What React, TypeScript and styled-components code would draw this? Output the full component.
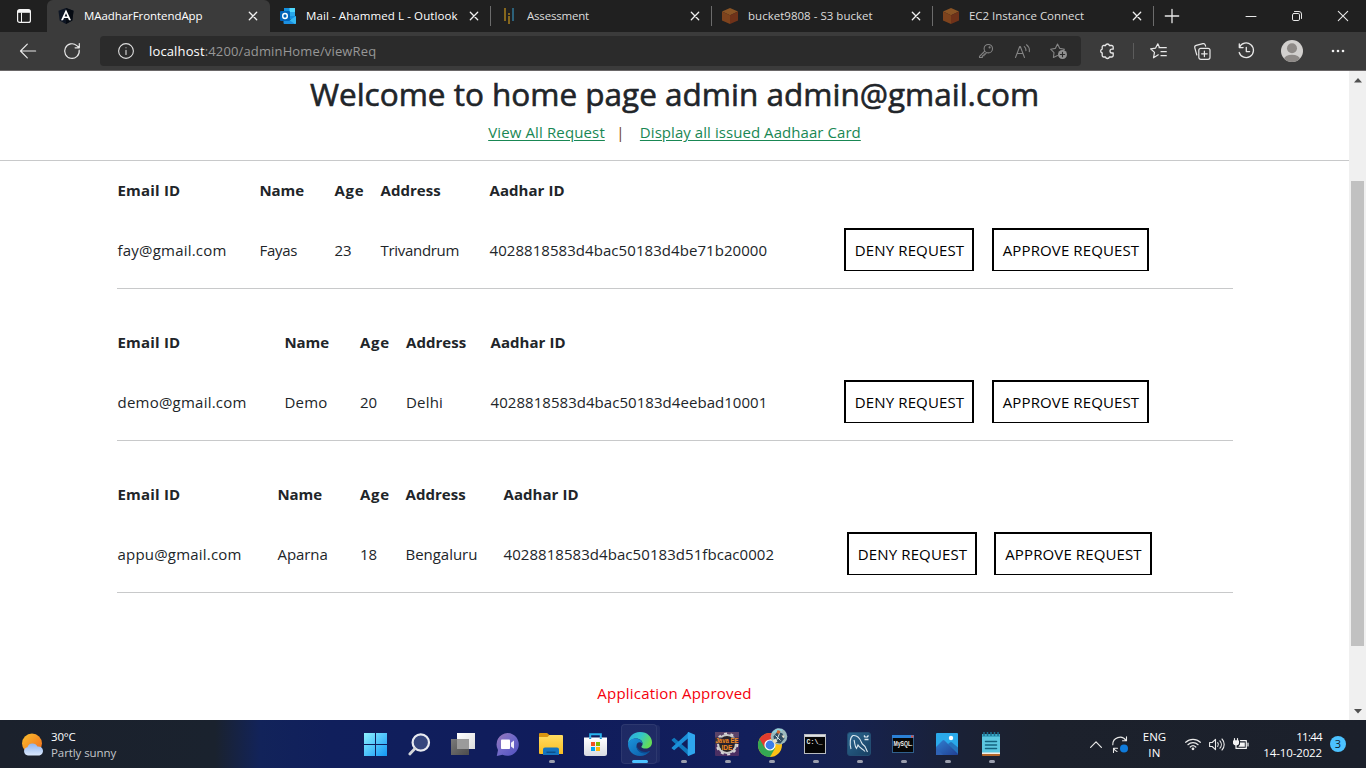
import React from "react";
import styled, { createGlobalStyle } from "styled-components";

const GlobalStyle = createGlobalStyle`
  *, *::before, *::after { box-sizing: border-box; }
  body { margin: 0; background: #fff; }
  svg { display: block; flex: none; overflow: visible; }
`;

const Screen = styled.div`
  display: flex;
  flex-direction: column;
  width: 1366px;
  height: 768px;
  overflow: hidden;
  font-family: "Open Sans", "Noto Sans", sans-serif;
`;

const Label = styled.span<{ $track?: number }>`
  letter-spacing: ${(p) => p.$track ?? 0}px;
  white-space: nowrap;
`;

/* ---------- tab strip ---------- */

const TabStrip = styled.div`
  display: flex;
  height: 32px;
  flex: none;
  background: #202020;
`;

const TabActions = styled.div`
  width: 47px;
  padding: 9px 0 0 17px;
`;

const Tab = styled.div<{ $active?: boolean; $divider?: boolean }>`
  display: flex;
  align-items: center;
  width: ${(p) => (p.$active ? 223 : 221)}px;
  height: 32px;
  padding: 0 13px 0 ${(p) => (p.$active ? 11 : 10)}px;
  border-radius: ${(p) => (p.$active ? "6px 6px 0 0" : "0")};
  background: ${(p) => (p.$active ? "#3b3b3b" : "transparent")};
  color: ${(p) => (p.$active ? "#fff" : "#dcdcdc")};
  font-size: 11.5px;
  position: relative;
  ${(p) =>
    p.$divider &&
    `&::after { content: ""; position: absolute; right: 0; top: 6px; width: 1px; height: 20px; background: #6c6c6c; }`}
`;

const TabTitle = styled(Label)<{ $bright?: boolean }>`
  flex: 1;
  margin-left: 10px;
  line-height: 32px;
  ${(p) => p.$bright && "color: #fff;"}
`;

const NewTab = styled.div`
  display: flex;
  align-items: center;
  justify-content: center;
  width: 36px;
`;

const WindowControls = styled.div`
  display: flex;
  margin-left: auto;
`;

const WindowButton = styled.div`
  display: flex;
  align-items: center;
  justify-content: center;
  width: 46px;
`;

/* ---------- toolbar ---------- */

const Toolbar = styled.div`
  display: flex;
  align-items: center;
  flex: none;
  height: 39px;
  padding-left: 6px;
  background: #3b3b3b;
  border-bottom: 1px solid #6a6768;
`;

const ToolButton = styled.div<{ $w?: number }>`
  display: flex;
  align-items: center;
  justify-content: center;
  width: ${(p) => p.$w ?? 44}px;
  height: 30px;
`;

const AddressBar = styled.div`
  display: flex;
  align-items: center;
  width: 981px;
  height: 30px;
  margin-left: 6px;
  padding: 0 4px 0 18px;
  border-radius: 4px;
  background: #2b2b2b;
`;

const Url = styled(Label)`
  flex: 1;
  margin-left: 15px;
  color: #979797;
  font-size: 13px;
  line-height: 30px;
  b { color: #fff; font-weight: 400; }
`;

const ToolDivider = styled.div`
  width: 1px;
  height: 16px;
  margin: 0 2px 0 1px;
  background: #5c5c5c;
`;

/* ---------- page ---------- */

const Viewport = styled.div`
  display: flex;
  flex: none;
  height: 649px;
`;

const Page = styled.main`
  width: 1349px;
  background: #fff;
  color: #212529;
  font-size: 15px;
`;

const PageHeader = styled.header`
  height: 90px;
  padding-top: 1px;
  border-bottom: 1px solid #c8c9ca;
  text-align: center;
`;

const Title = styled.h1`
  margin: 0;
  font-size: 31.5px;
  font-weight: 500;
  line-height: 43px;
  -webkit-text-stroke: 0.6px #212529;
`;

const Nav = styled.nav`
  display: flex;
  justify-content: center;
  margin-top: 5px;
  line-height: 24px;
`;

const NavLink = styled.a<{ $track: number }>`
  color: #198754;
  letter-spacing: ${(p) => p.$track}px;
  text-decoration: underline;
  text-underline-offset: 2px;
`;

const NavDivider = styled.span`
  width: 35px;
  padding-right: 4px;
  color: #6b3d16;
  text-align: center;
`;

const RequestList = styled.div`
  width: 1116px;
  margin-left: 117px;
`;

const Request = styled.section<{ $columns: string }>`
  display: grid;
  grid-template-columns: ${(p) => p.$columns};
  grid-template-rows: 58px 60px;
  align-items: center;
  height: 128px;
  margin-bottom: 24px;
  border-bottom: 1px solid #c8c9ca;
`;

const Head = styled.div<{ $span?: number; $track?: number }>`
  grid-column: span ${(p) => p.$span ?? 1};
  padding-left: 0.5px;
  font-weight: 700;
  letter-spacing: ${(p) => p.$track ?? 0}px;
`;

const Cell = styled.div<{ $track?: number }>`
  padding: 1px 0 0 0.5px;
  letter-spacing: ${(p) => p.$track ?? 0}px;
  white-space: nowrap;
`;

const ActionButton = styled.button<{ $w: number; $track: number }>`
  width: ${(p) => p.$w}px;
  height: 43px;
  padding: 0 0 0 1px;
  border: 2px solid #000;
  border-bottom-width: 1px;
  background: #fff;
  color: #000;
  font: inherit;
  letter-spacing: ${(p) => p.$track}px;
`;

const Notice = styled.p`
  margin: 0;
  padding-top: 64px;
  color: #f4000c;
  line-height: 24px;
  text-align: center;
  letter-spacing: 0.2px;
`;

const Scrollbar = styled.div`
  display: flex;
  flex-direction: column;
  align-items: center;
  width: 17px;
  padding: 7px 0 6px;
  background: #f0f0f0;
`;

const Thumb = styled.div`
  width: 13px;
  height: 465px;
  margin: 98px 0 auto;
  background: #c1c1c1;
`;

/* ---------- taskbar ---------- */

const Taskbar = styled.footer`
  display: flex;
  align-items: center;
  flex: none;
  height: 48px;
  background: linear-gradient(90deg, #1b212c 0, #1a222e 215px, #12235a 260px, #101f5c 330px, #101c5c 560px, #121f5b 750px, #16224f 850px, #1a2136 960px, #1c212c 1040px, #1b202b 100%);
  color: #fff;
  font-size: 11.5px;
`;

const Weather = styled.div`
  display: flex;
  align-items: center;
  width: 353px;
  padding-left: 21px;
`;

const Lines = styled.div<{ $align?: string; $w?: number }>`
  display: flex;
  flex-direction: column;
  width: ${(p) => (p.$w ? `${p.$w}px` : "auto")};
  padding-top: 2px;
  line-height: 16px;
  text-align: ${(p) => p.$align ?? "left"};
`;

const WeatherText = styled(Lines)`
  margin-left: 7px;
  span:last-child { color: #c3c6ca; }
`;

const Apps = styled.div`
  display: flex;
`;

const AppSlot = styled.div<{ $state?: "running" | "focused" }>`
  display: flex;
  align-items: center;
  justify-content: center;
  position: relative;
  width: 44px;
  height: 48px;
  ${(p) =>
    p.$state &&
    `&::after {
      content: ""; position: absolute; bottom: 5px; border-radius: 2px; height: 3px;
      left: ${p.$state === "focused" ? 15 : 20}px;
      width: ${p.$state === "focused" ? 16 : 6}px;
      background: ${p.$state === "focused" ? "#4cc2ff" : "#9b9fae"};
    }`}
`;

const FocusPlate = styled.div`
  display: flex;
  align-items: center;
  justify-content: center;
  width: 36px;
  height: 40px;
  margin-right: 1px;
  padding-left: 3px;
  border: 1px solid rgba(255, 255, 255, 0.07);
  border-radius: 4px;
  background: rgba(255, 255, 255, 0.06);
  box-shadow: 4px 0 0 -1px rgba(255, 255, 255, 0.06);
`;

const Tray = styled.div`
  display: flex;
  align-items: center;
  margin-left: auto;
  padding-right: 20px;
`;

const TrayIcon = styled.div<{ $w: number }>`
  display: flex;
  align-items: center;
  justify-content: center;
  width: ${(p) => p.$w}px;
`;

const Badge = styled.div`
  width: 16px;
  height: 16px;
  margin-left: 8px;
  border-radius: 50%;
  background: #4cc2ff;
  color: #10202c;
  font-size: 11px;
  line-height: 16px;
  text-align: center;
`;

/* ---------- icons ---------- */

const Line = ({ w = 16, h = w, vb, color = "#e8e8e8", sw = 1.1, children }: {
  w?: number; h?: number; vb?: string; color?: string; sw?: number; children: React.ReactNode;
}) => (
  <svg width={w} height={h} viewBox={vb ?? `0 0 ${w} ${h}`} fill="none" stroke={color} strokeWidth={sw} strokeLinecap="round" strokeLinejoin="round">
    {children}
  </svg>
);

const Cross = ({ size = 8 }: { size?: number }) => (
  <Line w={size} sw={1.3} vb="0 0 8 8" color="#f0f0f0"><path d="M.3.3l7.4 7.4M7.7.3L.3 7.7" /></Line>
);

const AngularIcon = () => (
  <svg width="16" height="16" viewBox="0 0 16 16">
    <path d="M8 0l7.5 2.7-1.2 9.8L8 16 1.700 12.500.5 2.700z" fill="#0e1624" />
    <path d="M8 0l7.500 2.700-1.200 9.800L8 16z" fill="#050a12" />
    <path d="M8 1.500L3 12.300h2l1-2.400h4l1 2.400h2zm0 3.800l1.400 3.200H6.600z" fill="#fff" />
  </svg>
);

const OutlookIcon = () => (
  <svg width="16" height="16" viewBox="0 0 16 16">
    <path d="M4 0h11v11H4z" fill="#1490df" />
    <path d="M9.500 0H15v4H9.500z" fill="#50d9ff" />
    <path d="M4 4h5.500v4H4z" fill="#0a5ea8" />
    <path d="M9.500 4H15v4H9.500z" fill="#28a8ea" />
    <path d="M3.500 8l6.300 4L16 8v7a1 1 0 0 1-1 1H4.500a1 1 0 0 1-1-1z" fill="#1b8fe0" />
    <path d="M16 8v7a1 1 0 0 1-1 1l-8-5.500 3 1.500z" fill="#35b8f1" />
    <rect y="3" width="10" height="10" rx="1" fill="#0364b8" />
    <ellipse cx="5" cy="8" rx="2.300" ry="2.500" fill="none" stroke="#fff" strokeWidth="1.400" />
  </svg>
);

const AssessmentIcon = () => (
  <svg width="16" height="16" viewBox="0 0 16 16">
    <path d="M3 0h2v13H3zM7 5h2v2H7zM7 8h2v8H7z" fill="#86671d" />
    <path d="M11 0h2v13h-2z" fill="#2c617a" />
  </svg>
);

const CubeIcon = () => (
  <svg width="16" height="16" viewBox="0 0 16 16">
    <path d="M8 0l8 3.500L8 7.300 0 3.500z" fill="#8a5425" />
    <path d="M0 3.500l8 3.800V16l-8-3.500z" fill="#7e431d" />
    <path d="M16 3.500L8 7.300V16l8-3.500z" fill="#6f3219" />
  </svg>
);

const WeatherIcon = () => (
  <svg width="23" height="24" viewBox="0 0 23 24">
    <defs>
      <linearGradient id="sun" x1="0" y1="0" x2="1" y2="1"><stop offset="0" stopColor="#fbc02d" /><stop offset="1" stopColor="#f0681c" /></linearGradient>
      <linearGradient id="cloud" x1="0" y1="0" x2="0" y2="1"><stop offset="0" stopColor="#8fb4ee" /><stop offset="1" stopColor="#dbe8fc" /></linearGradient>
    </defs>
    <circle cx="11" cy="11.500" r="10" fill="url(#sun)" />
    <path d="M7 23.500a4.200 4.200 0 0 1-.6-8.300 5.400 5.400 0 0 1 10-.7 4.600 4.600 0 1 1 2 9z" fill="url(#cloud)" />
  </svg>
);

const StartIcon = () => (
  <svg width="23" height="23" viewBox="0 0 23 23">
    <defs><linearGradient id="start" x1="0" y1="0" x2="23" y2="23" gradientUnits="userSpaceOnUse"><stop offset="0" stopColor="#8df1ff" /><stop offset="1" stopColor="#1297f5" /></linearGradient></defs>
    <path d="M0 0h11v11H0zM12 0h11v11H12zM0 12h11v11H0zM12 12h11v11H12z" fill="url(#start)" />
  </svg>
);

const SearchIcon = () => (
  <svg width="22" height="23" viewBox="0 0 22 23">
    <circle cx="12.800" cy="9.500" r="8.200" fill="#35457d" stroke="#e8eaf0" strokeWidth="2.200" />
    <path d="M7 15.500L1.800 21" stroke="#d4d6da" strokeWidth="2.800" strokeLinecap="round" />
  </svg>
);

const TaskViewIcon = () => (
  <svg width="24" height="22" viewBox="0 0 24 22">
    <defs>
      <linearGradient id="tvw" x1="0" y1="0" x2="1" y2="1"><stop offset="0" stopColor="#fff" /><stop offset="1" stopColor="#dcdcdc" /></linearGradient>
      <linearGradient id="tvg" x1="0" y1="0" x2="1" y2="1"><stop offset="0" stopColor="#7a7a7a" /><stop offset="1" stopColor="#4c4c4c" /></linearGradient>
    </defs>
    <path d="M6 0h18v16H6z" fill="url(#tvw)" />
    <path d="M0 6h18v16H0z" fill="url(#tvg)" />
    <path d="M6 6h12v10H6z" fill="#9b9b9b" />
  </svg>
);

const ChatIcon = () => (
  <svg width="23" height="23" viewBox="0 0 23 23">
    <defs><linearGradient id="chat" x1="0" y1="0" x2="1" y2="1"><stop offset="0" stopColor="#9a78b8" /><stop offset=".5" stopColor="#6f68c8" /><stop offset="1" stopColor="#504fbd" /></linearGradient></defs>
    <path d="M11.500 0a11.400 11.400 0 1 1-5 21.700L.8 22.900 2 17A11.400 11.400 0 0 1 11.500 0z" fill="url(#chat)" />
    <rect x="5" y="6.500" width="9" height="9.500" rx=".8" fill="#fff" />
    <path d="M15 9.800l3-2.400v8.400l-3-2.400z" fill="#f0effa" />
  </svg>
);

const FolderIcon = () => (
  <svg width="24" height="22" viewBox="0 0 24 22">
    <defs><linearGradient id="fold" x1="0" y1="0" x2="0" y2="1"><stop offset="0" stopColor="#ffdc62" /><stop offset="1" stopColor="#f9bd22" /></linearGradient></defs>
    <path d="M0 1a1 1 0 0 1 1-1h7l3 2.500L9 5H0z" fill="#d89410" />
    <path d="M0 4h8.500l2-2H23a1 1 0 0 1 1 1v18H1a1 1 0 0 1-1-1z" fill="url(#fold)" />
    <path d="M4 22v-5.500a2 2 0 0 1 2-2h12a2 2 0 0 1 2 2V22z" fill="#1474c0" />
    <path d="M7.500 18.500h9V20h-9z" fill="#0c4e8a" />
  </svg>
);

const StoreIcon = () => (
  <svg width="23" height="23" viewBox="0 0 23 23">
    <defs><linearGradient id="store" x1="0" y1="0" x2="0" y2="1"><stop offset="0" stopColor="#fff" /><stop offset="1" stopColor="#d9dce2" /></linearGradient></defs>
    <path d="M6.200 6V1.200h10.600V6" fill="none" stroke="#28b4ee" strokeWidth="2" />
    <path d="M0 4.500h23v16a2.500 2.500 0 0 1-2.500 2.500h-18A2.500 2.500 0 0 1 0 20.500z" fill="url(#store)" />
    <path d="M7 9h4v4H7z" fill="#f25022" /><path d="M12 9h4v4h-4z" fill="#7fba00" />
    <path d="M7 14h4v4H7z" fill="#00a4ef" /><path d="M12 14h4v4h-4z" fill="#ffb900" />
    <path d="M6.200 4.500v1.500M16.800 4.500v1.500" stroke="#178ac8" strokeWidth="2" />
  </svg>
);

const EdgeIcon = () => (
  <svg width="24" height="24" viewBox="0 0 24 24">
    <defs>
      <linearGradient id="edgeTop" x1="0" y1="0" x2="1" y2=".4"><stop offset="0" stopColor="#2ba7e0" /><stop offset=".55" stopColor="#33c6c8" /><stop offset="1" stopColor="#63dc58" /></linearGradient>
      <linearGradient id="edgeLow" x1="0" y1="0" x2="1" y2="1"><stop offset="0" stopColor="#1a93dc" /><stop offset="1" stopColor="#0c59a4" /></linearGradient>
    </defs>
    <path d="M0 12C0 5 5 0 12 0c7.500 0 12 5 12 10.200 0 4-3 6.300-6.400 6.300-2.600 0-4.200-.9-4.200-1.800 0-.6 1.200-1.200 1.200-3C14.600 9 12 6.500 8 6.500 4 6.500.8 9 0 12z" fill="url(#edgeTop)" />
    <path d="M0 12c.6-3.500 4-5.500 7.500-5.500 4 0 7 2.400 7 5.200-.6-1-1.600-1.500-2.800-1.500-2 0-3.200 1.700-3.200 3.900 0 4 4 6.400 8 6.400 2.200 0 4-.6 5.500-1.500C19.700 22 16 24 12 24 5 24 0 18.500 0 12z" fill="url(#edgeLow)" />
    <path d="M8.500 14.100c-.3 5 4.500 7.400 8 7.400 2.500 0 4.500-1.300 5.500-2.500-5 2-10.500 1.500-13.500-4.900z" fill="#0a4c93" />
  </svg>
);

const CodeIcon = () => (
  <svg width="24" height="24" viewBox="0 0 24 24">
    <path d="M1.200 7.200l2-1.500L18 18.500V24L.8 8.600a1 1 0 0 1 .4-1.400z" fill="#0f78bd" />
    <path d="M1.200 16.800l2 1.500L18 5.500V0L.8 15.400a1 1 0 0 0 .4 1.400z" fill="#1b8fd8" />
    <path d="M17.500 0L24 2.800v18.400L17.500 24c-.5 0-.8-.3-.8-.8V.8c0-.5.300-.8.8-.8z" fill="#2ea6ee" />
  </svg>
);

const EclipseIcon = () => (
  <svg width="24" height="24" viewBox="0 0 24 24">
    <rect width="24" height="24" rx="1" fill="#4b2f62" />
    <path d="M0 0h24v8H0z" fill="#5b4368" />
    <circle cx="12" cy="12" r="9" fill="#2a2626" stroke="#c9c9c9" strokeWidth="2.200" />
    <circle cx="12" cy="12" r="10.500" fill="none" stroke="#d8d8d8" strokeWidth="1.800" strokeDasharray="3 3.600" />
    <path d="M0 5.500h24v6.500H0zM6 12h12v6H6z" fill="#2a2030" opacity=".75" />
    <g fontFamily="Liberation Sans, sans-serif" fontWeight="700" fontSize="7" fill="#f28a1e" textAnchor="middle">
      <text x="12" y="11.300" textLength="23" lengthAdjust="spacingAndGlyphs">Java EE</text>
      <text x="12" y="17.500" textLength="11" lengthAdjust="spacingAndGlyphs">IDE</text>
    </g>
  </svg>
);

const ChromeIcon = () => (
  <svg width="30" height="30" viewBox="0 0 30 30">
    <circle cx="14" cy="16" r="12" fill="#fbc116" />
    <path d="M3.600 10a12 12 0 0 0 10.400 18l5.200-9L14 16z" fill="#34a853" />
    <path d="M3.600 10a12 12 0 0 1 20.800 0H14v6l-5.200 3z" fill="#e33b2e" />
    <circle cx="14" cy="16" r="5.600" fill="#fff" />
    <circle cx="14" cy="16" r="4.400" fill="#3b7de8" />
    <circle cx="23" cy="7.500" r="8.300" fill="#9bb9bd" />
    <path d="M15.500 3.500l6-4 5 1-2 3.500z" fill="#8fd2df" />
    <path d="M17.500 7.500l4-5 5 2 2 5-4 5-6-1z" fill="#2f4d63" />
    <path d="M21.500 1l3 1-1 3-3-1z" fill="#d6692d" />
    <path d="M16.500 11.500l3-2 2 3-3 2zM25.500 6.500h3l-1 3z" fill="#e9dfc8" />
    <path d="M19.500 6.500l5 5M23.500 4.500l-3 7" stroke="#d5e6e8" strokeWidth="1" />
  </svg>
);

const CmdIcon = () => (
  <svg width="22" height="20" viewBox="0 0 22 20">
    <path d="M0 0h22v20H0z" fill="#b9bcc0" />
    <path d="M1 3h20v16H1z" fill="#050505" />
    <path d="M1 1h20v1.500H1z" fill="#dfe1e4" />
    <text x="2.500" y="9.500" fontFamily="Liberation Mono, monospace" fontSize="6.500" fontWeight="700" fill="#eee" textLength="16">C:\_</text>
  </svg>
);

const DolphinIcon = () => (
  <svg width="24" height="24" viewBox="0 0 24 24">
    <defs><linearGradient id="dol" x1="0" y1="0" x2="1" y2="1"><stop offset="0" stopColor="#2c6790" /><stop offset="1" stopColor="#173f62" /></linearGradient></defs>
    <rect x=".5" y=".5" width="23" height="23" rx="2.500" fill="url(#dol)" stroke="#234d72" />
    <path d="M4 17C2.500 11 3 5 6 3.500c4-.5 7 3 8.500 7 .8 2.500 3.500 3 4 5l2 4.500M7 8c1 3 .5 6 2.500 8.500L11 13c2 3.500 4.500 3.500 7 6.500" fill="none" stroke="#dce8f0" strokeWidth="1.100" />
    <path d="M17 3.500l1.500 2M21.500 3.500l-2 2M17.500 7.500h4" fill="none" stroke="#dce8f0" strokeWidth="1.400" />
  </svg>
);

const MysqlIcon = () => (
  <svg width="22" height="18" viewBox="0 0 22 18">
    <path d="M0 0h22v18H0z" fill="#30608c" />
    <path d="M0 0h22v3H0z" fill="#2b80d6" />
    <path d="M19 .5h2.500V2.500H19z" fill="#e0503a" />
    <path d="M1 3h20v14H1z" fill="#060606" />
    <text x="1.500" y="10.500" fontFamily="Liberation Sans, sans-serif" fontSize="6.500" fontWeight="700" fill="#eee" textLength="19" lengthAdjust="spacingAndGlyphs">MySQL.</text>
  </svg>
);

const PhotosIcon = () => (
  <svg width="22" height="22" viewBox="0 0 22 22">
    <defs><linearGradient id="ph" x1="0" y1="0" x2="1" y2="1"><stop offset="0" stopColor="#2f7fd0" /><stop offset="1" stopColor="#213f93" /></linearGradient></defs>
    <rect width="22" height="22" rx="1" fill="#2aa9ea" />
    <path d="M0 14L6.500 7.500a1.500 1.500 0 0 1 2 0L22 21v1H0z" fill="url(#ph)" />
    <path d="M0 15l7 7H0z" fill="#2f62b4" />
    <path d="M12 11l2-1.500a1.500 1.500 0 0 1 2 0l6 5V22z" fill="#1f3f8f" opacity=".5" />
    <circle cx="15" cy="5" r="2.200" fill="#fff" />
  </svg>
);

const NotepadIcon = () => (
  <svg width="18" height="24" viewBox="0 0 18 24">
    <path d="M0 2h18v19H0z" fill="#5cc7e0" />
    <path d="M0 2h18v3H0z" fill="#3aa7c4" />
    <path d="M0 20.500h18V22H0z" fill="#f0efe8" />
    <path d="M0 22h18v1a1 1 0 0 1-1 1H1a1 1 0 0 1-1-1z" fill="#b4672a" />
    <path d="M2 0v4M5.500 0v4M9 0v4M12.500 0v4M16 0v4" stroke="#1c6f8f" strokeWidth="1.500" />
    <path d="M3.500 9.500h11M3.500 13h11M3.500 16.500h11" stroke="#14637f" strokeWidth="1.500" strokeLinecap="round" />
  </svg>
);

/* ---------- data ---------- */

type Entry = { text: string; track: number };
type RequestRow = { columns: string; cells: Entry[] };

const headings: Entry[] = [
  { text: "Email ID", track: 0.2 },
  { text: "Name", track: -0.1 },
  { text: "Age", track: 0.7 },
  { text: "Address", track: 0.05 },
  { text: "Aadhar ID", track: 0.06 },
];

const requests: RequestRow[] = [
  {
    columns: "142px 75px 46px 109px 355px 148px 1fr",
    cells: [
      { text: "fay@gmail.com", track: 0.21 }, { text: "Fayas", track: -0.3 }, { text: "23", track: -0.2 },
      { text: "Trivandrum", track: -0.3 }, { text: "4028818583d4bac50183d4be71b20000", track: 0.06 },
    ],
  },
  {
    columns: "167px 75.5px 46px 84.5px 354px 148px 1fr",
    cells: [
      { text: "demo@gmail.com", track: 0.23 }, { text: "Demo", track: 0.2 }, { text: "20", track: -0.2 },
      { text: "Delhi", track: 0.2 }, { text: "4028818583d4bac50183d4eebad10001", track: 0.05 },
    ],
  },
  {
    columns: "160px 82.500px 45.500px 98px 344px 147px 1fr",
    cells: [
      { text: "appu@gmail.com", track: 0.2 }, { text: "Aparna", track: -0.07 }, { text: "18", track: -0.2 },
      { text: "Bengaluru", track: -0.03 }, { text: "4028818583d4bac50183d51fbcac0002", track: 0.06 },
    ],
  },
];

const apps: { icon: React.ReactNode; state?: "running" | "focused" }[] = [
  { icon: <StartIcon /> },
  { icon: <SearchIcon /> },
  { icon: <TaskViewIcon /> },
  { icon: <ChatIcon /> },
  { icon: <FolderIcon />, state: "running" },
  { icon: <StoreIcon /> },
  { icon: <FocusPlate><EdgeIcon /></FocusPlate>, state: "focused" },
  { icon: <CodeIcon />, state: "running" },
  { icon: <EclipseIcon />, state: "running" },
  { icon: <ChromeIcon />, state: "running" },
  { icon: <CmdIcon />, state: "running" },
  { icon: <DolphinIcon />, state: "running" },
  { icon: <MysqlIcon />, state: "running" },
  { icon: <PhotosIcon />, state: "running" },
  { icon: <NotepadIcon />, state: "running" },
];

const tabs = [
  { title: "MAadharFrontendApp", track: -0.07, icon: <AngularIcon />, active: true },
  { title: "Mail - Ahammed L - Outlook", track: 0.09, icon: <OutlookIcon />, bright: true },
  { title: "Assessment", track: -0.2, icon: <AssessmentIcon /> },
  { title: "bucket9808 - S3 bucket", track: 0.02, icon: <CubeIcon /> },
  { title: "EC2 Instance Connect", track: -0.04, icon: <CubeIcon /> },
];

export default function App() {
  return (
    <Screen>
      <GlobalStyle />
      <TabStrip>
        <TabActions>
          <svg width="14" height="14" viewBox="0 0 14 14">
            <rect x=".6" y=".6" width="12.800" height="12.800" rx="2" fill="none" stroke="#f4f4f4" strokeWidth="1.200" />
            <path d="M1 1h12v2.800H1z" fill="#f4f4f4" />
            <path d="M4.500 3.500v10" stroke="#f4f4f4" strokeWidth="1" />
          </svg>
        </TabActions>
        {tabs.map((t) => (
          <Tab key={t.title} $active={t.active} $divider={!t.active}>
            {t.icon}
            <TabTitle $track={t.track} $bright={t.bright}>{t.title}</TabTitle>
            <Cross />
          </Tab>
        ))}
        <NewTab><Line w={14} sw={1.3}><path d="M7 .3v13.400M.3 7h13.400" /></Line></NewTab>
        <WindowControls>
          <WindowButton><Line w={10} sw={1}><path d="M0 5.500h10" /></Line></WindowButton>
          <WindowButton>
            <Line w={10} sw={1}><rect x=".5" y="2.500" width="7" height="7" rx="1.300" /><path d="M2.500.5H7A2.500 2.500 0 0 1 9.500 3v4.500" /></Line>
          </WindowButton>
          <WindowButton><Line w={10} sw={1.100}><path d="M.3.300l9.400 9.400M9.700.300L.3 9.700" /></Line></WindowButton>
        </WindowControls>
      </TabStrip>

      <Toolbar>
        <ToolButton><Line w={16} sw={1.200}><path d="M15.600 8H.6M7.300 1.200L.5 8l6.800 6.800" /></Line></ToolButton>
        <ToolButton><Line w={16} sw={1.200}><path d="M15.200 7.200A7.300 7.300 0 1 1 12.800 2.600L15 4.500M15.300.6v4.200h-4.200" /></Line></ToolButton>
        <AddressBar>
          <Line w={16} sw={1.100} color="#dedede"><circle cx="8" cy="8" r="7.400" /><path d="M8 7.200v4.300M8 4.700v.1" /></Line>
          <Url $track={0.14}><b>localhost</b>:4200/adminHome/viewReq</Url>
          <ToolButton $w={36}>
            <Line w={14} color="#848484"><circle cx="9.300" cy="4.700" r="4.200" /><circle cx="10.600" cy="3.400" r=".5" /><path d="M5.700 7.200L.5 12.300v1.200h2.800v-1.700h1.700v-1.700h1.300L7.300 9" /></Line>
          </ToolButton>
          <ToolButton $w={36}>
            <Line w={15} h={14} color="#848484"><path d="M.5 13.500L4.700 2.500h.6l4.200 11M2 9.500h6M9.300 2.600c1.300 1 1.800 2.400 1.600 4.200M11.500.8c2.200 1.600 3.200 4 2.800 6.900" /></Line>
          </ToolButton>
          <ToolButton $w={37}>
            <Line w={17} h={16} color="#848484">
              <path d="M7.500 12.500L3.400 14.400l.6-4.700L.6 6.200l4.700-.8L7.500 1l2.300 4.400 4.700.8L13 7.700" />
              <circle cx="12.500" cy="11.500" r="4.500" fill="#909090" stroke="none" />
              <path d="M12.500 9.300v4.400M10.300 11.500h4.400" stroke="#2b2b2b" />
            </Line>
          </ToolButton>
        </AddressBar>
        <ToolButton $w={51}>
          <Line w={15} h={16} sw={1.300}><path d="M3 2.500h2.300a2 1.900 0 0 1 3.900 0h2.300a1.500 1.500 0 0 1 1.500 1.500v2.200h-1.300a1.900 1.900 0 0 0 0 3.800H13v2.500a1.500 1.500 0 0 1-1.500 1.500H9.200a2 1.900 0 0 1-3.900 0H3.500A1.500 1.500 0 0 1 2 12.500V10a2 2 0 0 1 0-3.900V4a1.500 1.500 0 0 1 1-1.500z" transform="translate(1.200 0)" /></Line>
        </ToolButton>
        <ToolDivider />
        <ToolButton>
          <Line w={17} h={16} sw={1.200}><path d="M9 4.700h7.300M11 8.700h5.300M11 12.700h5.300M8.300 11.800l-4.800 3 1-5.400L.6 5.800l5-.7L7.800.8l1.700 3.700" /></Line>
        </ToolButton>
        <ToolButton>
          <Line w={17} h={17} sw={1.200}><rect x="4.800" y="5.300" width="11.200" height="11" rx="2" /><path d="M10.400 8v5.600M7.600 10.800h5.600M2.800 12L.8 4.800A2 2 0 0 1 2.200 2.400L8.900.7a2 2 0 0 1 2.400 1.400l.3 1" /></Line>
        </ToolButton>
        <ToolButton>
          <Line w={17} h={16} sw={1.300}><path d="M1.500 4.300A7.300 7.300 0 1 1 1.200 9.500M1.300.8v3.800h3.800M8.300 4.300v4.300h3.300" /></Line>
        </ToolButton>
        <ToolButton $w={48}>
          <svg width="22" height="22" viewBox="0 0 22 22">
            <defs><clipPath id="avatar"><circle cx="11" cy="11" r="11" /></clipPath></defs>
            <circle cx="11" cy="11" r="11" fill="#d2d0ce" />
            <g clipPath="url(#avatar)" fill="#8e8a87"><circle cx="11" cy="8.300" r="5" /><ellipse cx="11" cy="19.500" rx="8" ry="4.800" /></g>
          </svg>
        </ToolButton>
        <ToolButton>
          <svg width="14" height="4" viewBox="0 0 14 4"><g fill="#f0f0f0"><circle cx="2" cy="2" r="1.300" /><circle cx="7" cy="2" r="1.300" /><circle cx="12" cy="2" r="1.300" /></g></svg>
        </ToolButton>
      </Toolbar>

      <Viewport>
        <Page>
          <PageHeader>
            <Title>Welcome to home page admin admin@gmail.com</Title>
            <Nav>
              <NavLink $track={0.13}>View All Request</NavLink>
              <NavDivider>|</NavDivider>
              <NavLink $track={0.06}>Display all issued Aadhaar Card</NavLink>
            </Nav>
          </PageHeader>
          <RequestList>
            {requests.map((r, n) => (
              <Request key={r.cells[0].text} $columns={r.columns}>
                {headings.map((h, i) => (
                  <Head key={h.text} $track={h.track} $span={i === headings.length - 1 ? 3 : 1}>{h.text}</Head>
                ))}
                {r.cells.map((c) => <Cell key={c.text} $track={c.track}>{c.text}</Cell>)}
                <ActionButton $w={130} $track={0.13}>DENY REQUEST</ActionButton>
                <ActionButton $w={n === 2 ? 158 : 157} $track={0.12}>APPROVE REQUEST</ActionButton>
              </Request>
            ))}
          </RequestList>
          <Notice>Application Approved</Notice>
        </Page>
        <Scrollbar>
          <svg width="8" height="5" viewBox="0 0 8 5"><path d="M4 0l4 4.500H0z" fill="#505050" /></svg>
          <Thumb />
          <svg width="8" height="5" viewBox="0 0 8 5"><path d="M4 4.500L8 0H0z" fill="#505050" /></svg>
        </Scrollbar>
      </Viewport>

      <Taskbar>
        <Weather>
          <WeatherIcon />
          <WeatherText>
            <Label $track={-0.19}>30°C</Label>
            <Label $track={-0.08}>Partly sunny</Label>
          </WeatherText>
        </Weather>
        <Apps>
          {apps.map((a, i) => <AppSlot key={i} $state={a.state}>{a.icon}</AppSlot>)}
        </Apps>
        <Tray>
          <TrayIcon $w={24}><Line w={12} h={7} sw={1.200}><path d="M.6 6.400L6 .8l5.400 5.600" /></Line></TrayIcon>
          <TrayIcon $w={24}>
            <Line w={16} h={17} sw={1.100}>
              <path d="M.8 8.800A7.200 7.200 0 0 1 14 4.500M14.500.8v4h-4M5 15.500A7 7 0 0 1 1.800 12.800M1.500 16.500v-4.200h4" />
              <circle cx="12" cy="12.500" r="4" fill="#0f7bdc" stroke="none" />
            </Line>
          </TrayIcon>
          <Lines $align="center" $w={45}><Label>ENG</Label><Label $track={0.3}>IN</Label></Lines>
          <TrayIcon $w={31}>
            <Line w={16} h={12} sw={1.200}><path d="M.7 4.300a10.500 10.500 0 0 1 14.600 0M2.900 6.700a7.300 7.300 0 0 1 10.200 0M5.200 9a4.100 4.100 0 0 1 5.600 0" /><circle cx="8" cy="10.800" r=".8" fill="#fff" /></Line>
          </TrayIcon>
          <TrayIcon $w={17}>
            <Line w={16} h={13} sw={1.100}><path d="M.6 4.500h2.600L6.500 1.300v10.400L3.200 8.500H.6zM8.700 4.700a2.800 2.800 0 0 1 0 3.600M10.900 2.800a5.500 5.500 0 0 1 0 7.400M13 1a8 8 0 0 1 0 11" /></Line>
          </TrayIcon>
          <TrayIcon $w={32}>
            <Line w={16} h={12} sw={1.200} color="#f4f4f4"><path d="M1.500.5v2M4.500.5v2M.6 3h4.800v1.500a2.400 2.400 0 0 1-4.800 0zM3 7v3.400h10.300V2.600H7.500M15 5v3" /><path d="M7 4.500h4.800v4.200H5.300L7 6.500z" fill="#f4f4f4" stroke="none" /><path d="M.8 3h4.400v1.500a2.200 2.200 0 0 1-4.400 0z" fill="#f4f4f4" /></Line>
          </TrayIcon>
          <Lines $align="right" $w={65}><Label $track={-0.7}>11:44</Label><Label $track={-0.13}>14-10-2022</Label></Lines>
          <Badge>3</Badge>
        </Tray>
      </Taskbar>
    </Screen>
  );
}
